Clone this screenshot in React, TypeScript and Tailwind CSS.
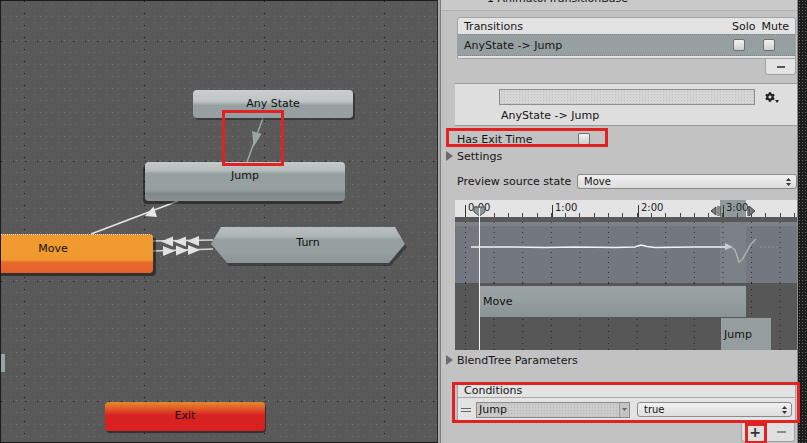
import React from "react";
import { FaCog } from "react-icons/fa";

const Check = () => (
  <div className="h-[12px] w-[12px] rounded-[2px] border border-[#707070] bg-[linear-gradient(to_bottom,#f2f2f2,#cfcfcf)]" />
);

const Fold = () => (
  <svg width="7" height="10" className="shrink-0">
    <path d="M0 0L7 5L0 10Z" fill="#6b6b6b" />
  </svg>
);

const UpDown = () => (
  <svg width="5" height="8">
    <path d="M2.5 0L5 3H0Z M0 5H5L2.5 8Z" fill="#333" />
  </svg>
);

function CanvasArt() {
  const vx = [23.5, 143.5, 263.5, 383.5];
  const hy = [40.5, 160.5, 280.5, 400.5];
  return (
    <svg className="absolute inset-0" width="437" height="443">
      <defs>
        <pattern id="minor" width="12" height="12" patternUnits="userSpaceOnUse">
          <rect x="3" y="3" width="1" height="1" fill="#737373" />
          <rect x="9" y="9" width="1" height="1" fill="#737373" />
          <rect x="9" y="3" width="1" height="1" fill="#686868" />
        </pattern>
      </defs>
      <rect width="437" height="443" fill="url(#minor)" />
      {vx.map((x) => (
        <line key={x} x1={x} y1="0" x2={x} y2="443" stroke="#151515" strokeDasharray="1 11" />
      ))}
      {hy.map((y) => (
        <line key={y} x1="0" y1={y} x2="437" y2={y} stroke="#151515" strokeDasharray="1 11" />
      ))}
      {/* Any -> Jump */}
      <line x1="262" y1="117" x2="246" y2="161" stroke="#9aa6a6" strokeWidth="1.5" />
      <polygon points="252.5,146 260.5,133 251,130" fill="#9aa6a6" />
      {/* Jump -> Move */}
      <line x1="177" y1="200" x2="90" y2="233" stroke="#e6e6e6" strokeWidth="1.5" />
      <polygon points="144,215 156,216 152.5,205.5" fill="#e6e6e6" />
      {/* Move <-> Turn */}
      <line x1="152" y1="240" x2="212" y2="239" stroke="#d6d6d6" strokeWidth="1.5" />
      <line x1="152" y1="250" x2="212" y2="248" stroke="#d6d6d6" strokeWidth="1.5" />
      <polygon points="160,240.5 172,235.5 172,245.5" fill="#e2e2e2" />
      <polygon points="173,240.5 185,235.5 185,245.5" fill="#e2e2e2" />
      <polygon points="186,240 198,235 198,245" fill="#e2e2e2" />
      <polygon points="174,250 162,245 162,255" fill="#e2e2e2" />
      <polygon points="187,249.5 175,244.5 175,254.5" fill="#e2e2e2" />
      <polygon points="199,249 187,244 187,254" fill="#e2e2e2" />
    </svg>
  );
}

function GraphCanvas() {
  return (
    <div className="relative h-[443px] w-[437px] shrink-0 overflow-hidden border-l border-t border-b border-[#1c1c1c] bg-[#595959]">
      <CanvasArt />
      {/* Any State */}
      <div className="absolute left-[192px] top-[89px] flex h-[28px] w-[160px] items-center justify-center rounded-[4px] bg-[linear-gradient(to_bottom,#cacdcd_0%,#bfc4c4_40%,#96a0a0_55%,#96a0a0_100%)] text-[11px] text-[#111] shadow-[2px_2px_0_rgba(0,0,0,0.35)]">
        Any State
      </div>
      {/* Jump */}
      <div className="absolute left-[144px] top-[161px] h-[39px] w-[200px] rounded-[4px] bg-[linear-gradient(to_bottom,#c5c9c9_0%,#b6bcbc_22%,#96a0a0_30%,#96a0a0_70%,#7f8888_82%,#8a9393_100%)] pt-[7px] text-center text-[11px] leading-[13px] text-[#111] shadow-[-2px_3px_0_rgba(0,0,0,0.45)]">
        Jump
      </div>
      {/* Move */}
      <div className="absolute left-[-48px] top-[233px] h-[39px] w-[200px] rounded-[4px] border-t border-dotted border-[#fff6e0] bg-[linear-gradient(to_bottom,#f09a30_0%,#f09a30_65%,#e86a2c_72%,#e5602a_100%)] pt-[7px] text-center text-[11px] leading-[13px] text-[#111] shadow-[3px_3px_0_rgba(0,0,0,0.45)]">
        Move
      </div>
      {/* Turn */}
      <div className="absolute left-[212px] top-[229px] h-[36px] w-[194px] bg-[#2e2e2e] opacity-60 [clip-path:polygon(10px_0,184px_0,194px_17px,178px_36px,16px_36px,0_17px)]" />
      <div className="absolute left-[210px] top-[226px] flex h-[36px] w-[194px] items-center justify-center bg-[linear-gradient(to_bottom,#b9bfbf_0%,#aeb5b5_25%,#96a0a0_35%,#96a0a0_70%,#8a9494_100%)] pb-[3px] text-[11px] text-[#111] [clip-path:polygon(10px_0,184px_0,194px_17px,178px_36px,16px_36px,0_17px)]">
        Turn
      </div>
      {/* partial node */}
      <div className="absolute left-0 top-[353px] h-[18px] w-[4px] bg-[#9aa3a3]" />
      {/* Exit */}
      <div className="absolute left-[104px] top-[401px] flex h-[29px] w-[160px] items-center justify-center rounded-[4px] bg-[linear-gradient(to_bottom,#e88a2a_0%,#e0602a_20%,#d92222_45%,#d92020_100%)] text-[11px] text-[#111] shadow-[1px_2px_0_rgba(0,0,0,0.45)]">
        Exit
      </div>
    </div>
  );
}

function Timeline() {
  const majors = [
    { x: 10, t: "0:00" },
    { x: 97, t: "1:00" },
    { x: 183, t: "2:00" },
    { x: 268, t: "3:00" },
  ];
  const minors: number[] = [];
  for (let i = 0; i < 24; i++) minors.push(10 + i * 14.3);
  const dots: number[] = [];
  for (let i = 0; i < 12; i++) dots.push(10.5 + i * 28.6);
  return (
    <div className="relative ml-[14px] mt-[11px] flex h-[150px] w-[342px] flex-col">
      {/* ruler */}
      <div className="relative h-[17px] bg-[#e4e4e4]">
        <svg className="absolute inset-0" width="342" height="17">
          <rect x="265" y="0" width="26" height="17" fill="#8f9b9b" />
          {minors.map((x) => (
            <line key={x} x1={Math.round(x) + 0.5} y1="13" x2={Math.round(x) + 0.5} y2="17" stroke="#444" />
          ))}
          {majors.map((m) => (
            <line key={m.x} x1={m.x + 0.5} y1="5" x2={m.x + 0.5} y2="17" stroke="#333" />
          ))}
          {majors.map((m) => (
            <text key={m.t} x={m.x + 3} y="11" fontSize="10" fill="#222" fontFamily="DejaVu Sans, sans-serif">
              {m.t}
            </text>
          ))}
          <path d="M19 7H30V12L24.5 16L19 12Z" fill="#8c9696" stroke="#555" />
          <path d="M265 6V16M263 6V16" stroke="#333" />
          <path d="M256 11L261 7V15Z" fill="#777" stroke="#444" />
          <path d="M293 6V16" stroke="#333" />
          <path d="M300 11L294 6V16Z" fill="#777" stroke="#444" />
        </svg>
      </div>
      <div className="h-[5px] bg-[#595959]" />
      {/* curve area */}
      <div className="relative h-[61px] bg-[#737880]">
        <div className="h-[4px] bg-[#7d8288]" />
        <svg className="absolute inset-0" width="342" height="61">
          <rect x="265" y="0" width="26" height="61" fill="#7b8186" />
          {dots.map((x) => (
            <line key={x} x1={x} y1="0" x2={x} y2="61" stroke="#2e2e2e" strokeDasharray="1 4" />
          ))}
          <polyline
            points="16,25 60,25 90,25.5 120,25 160,25.5 180,25 186,23 192,24.5 200,25.5 240,25 276,25"
            fill="none"
            stroke="#f2f2f2"
            strokeWidth="1.5"
          />
          <path d="M270 21L278 25L270 28Z" fill="#c8cccc" />
          <path d="M276 25L280 28L284 40L287 38L296 22L301 17" fill="none" stroke="#a8b4ac" strokeWidth="1.5" />
          <line x1="305" y1="25" x2="325" y2="25" stroke="#8a9090" strokeDasharray="2 2" />
        </svg>
      </div>
      {/* clips area */}
      <div className="relative flex h-[67px] flex-col bg-[#575757]">
        <svg className="absolute inset-0" width="342" height="67">
          {dots.map((x) => (
            <line key={x} x1={x} y1="0" x2={x} y2="67" stroke="#222" strokeDasharray="1 5" />
          ))}
        </svg>
        <div className="relative ml-[24px] mt-[3px] flex h-[31px] w-[267px] items-center bg-[linear-gradient(to_bottom,#98a2a3_0%,#96a0a1_40%,#8a9495_100%)] pl-[4px] text-[11px] text-[#111]">
          Move
        </div>
        <div className="relative ml-[266px] mt-[1px] flex h-[32px] w-[50px] items-center bg-[#949e9f] pl-[3px] text-[11px] text-[#111]">
          Jump
        </div>
      </div>
      <div className="absolute left-[24px] top-[8px] h-[142px] w-[1px] bg-[#f4f4f4]" />
    </div>
  );
}

function Inspector() {
  return (
    <div className="relative flex h-[443px] w-[356px] shrink-0 flex-col bg-[#c2c2c2] text-[11px] leading-[13px] text-[#151515]">
      {/* header cut off */}
      <div className="h-[11px] overflow-hidden border-b border-[#b0b0b0] bg-[#c9c9c9] pl-[46px]">
        <div className="mt-[-8px] whitespace-nowrap">1 AnimatorTransitionBase</div>
      </div>
      {/* transitions list */}
      <div className="ml-[16px] mr-[1px] mt-[6px] flex flex-col rounded-t-[3px] border border-[#a2a2a2] bg-[#e3e3e3]">
        <div className="flex h-[16px] items-center pl-[6px] pr-[6px]">
          <span>Transitions</span>
          <span className="ml-auto">Solo</span>
          <span className="ml-[6px]">Mute</span>
        </div>
        <div className="flex h-[22px] items-center border-y border-dotted border-[#7c8686] bg-[#96a0a0] pl-[6px]">
          <span>AnyState -&gt; Jump</span>
          <div className="ml-auto mr-[20px] flex gap-[18px]">
            <Check />
            <Check />
          </div>
        </div>
        <div className="h-[2px]" />
      </div>
      <div className="mr-[1px] flex h-[16px] w-[31px] items-center justify-center self-end rounded-b-[3px] border border-t-0 border-[#a2a2a2] bg-[#e3e3e3]">
        <div className="h-[2px] w-[8px] bg-[#555]" />
      </div>
      {/* info box */}
      <div className="ml-[14px] mt-[8px] h-[43px] border-y border-[#9a9a9a] bg-[#dedede] bg-[radial-gradient(#cfcfcf_0.6px,transparent_0.7px)] bg-[length:4px_4px]">
        <div className="mt-[5px] flex items-center">
          <div className="ml-[44px] h-[16px] w-[256px] border border-[#8e8e8e] bg-[#d5d5d5] bg-[radial-gradient(#bdbdbd_0.6px,transparent_0.7px)] bg-[length:3px_3px]" />
          <div className="ml-[10px] flex items-end text-[#222]">
            <FaCog size={10} />
            <svg width="4" height="3" className="mb-[-1px]">
              <path d="M0 0H4L2 3Z" fill="#222" />
            </svg>
          </div>
        </div>
        <div className="ml-[46px] mt-[4px]">AnyState -&gt; Jump</div>
      </div>
      {/* has exit time */}
      <div className="mt-[5px] flex h-[16px] items-center pl-[16px]">
        <span className="w-[121px]">Has Exit Time</span>
        <Check />
      </div>
      {/* settings */}
      <div className="mt-[1px] flex h-[16px] items-center gap-[4px] pl-[5px]">
        <Fold />
        <span>Settings</span>
      </div>
      {/* preview */}
      <div className="mt-[10px] flex h-[15px] items-center pl-[16px]">
        <span className="w-[120px] shrink-0">Preview source state</span>
        <div className="flex h-[15px] flex-1 items-center rounded-[3px] border border-[#8a8a8a] bg-[linear-gradient(to_bottom,#f0f0f0,#dcdcdc)] pl-[6px] pr-[5px]">
          <span className="text-[10px]">Move</span>
          <span className="ml-auto">
            <UpDown />
          </span>
        </div>
      </div>
      <Timeline />
      {/* blendtree */}
      <div className="mt-[2px] flex h-[16px] items-center gap-[4px] pl-[5px]">
        <Fold />
        <span>BlendTree Parameters</span>
      </div>
      {/* conditions */}
      <div className="ml-[16px] mr-[1px] mt-[14px] flex flex-col rounded-t-[3px] border border-[#a2a2a2] bg-[#e3e3e3]">
        <div className="flex h-[15px] items-center border-b border-[#a8a8a8] pl-[6px]">Conditions</div>
        <div className="flex h-[23px] items-center">
          <div className="ml-[3px] flex w-[10px] flex-col gap-[2px]">
            <div className="h-[1px] bg-[#666]" />
            <div className="h-[1px] bg-[#666]" />
          </div>
          <div className="ml-[5px] flex h-[16px] w-[154px] items-stretch border border-[#8a8a8a] bg-[#cbcbcb] bg-[radial-gradient(#b5b5b5_0.6px,transparent_0.7px)] bg-[length:3px_3px]">
            <span className="flex flex-1 items-center pl-[2px]">Jump</span>
            <span className="flex w-[10px] items-center justify-center border-l border-[#9a9a9a] bg-[#c4c4c4]">
              <svg width="5" height="3">
                <path d="M0 0H5L2.5 3Z" fill="#666" />
              </svg>
            </span>
          </div>
          <div className="ml-[7px] flex h-[15px] w-[155px] items-center rounded-[3px] border border-[#8a8a8a] bg-[linear-gradient(to_bottom,#f0f0f0,#dedede)] pl-[6px] pr-[4px]">
            <span className="text-[10px]">true</span>
            <span className="ml-auto">
              <UpDown />
            </span>
          </div>
        </div>
      </div>
      <div className="mr-[2px] flex h-[20px] w-[54px] self-end rounded-b-[3px] border border-t-0 border-[#a2a2a2] bg-[#e0e0e0]">
        <div className="flex w-[27px] items-center justify-center text-[14px] font-bold leading-none text-[#333]">+</div>
        <div className="flex w-[27px] items-center justify-center">
          <div className="h-[2px] w-[9px] bg-[#8a8a8a]" />
        </div>
      </div>
    </div>
  );
}

export default function App() {
  return (
    <div className="relative flex h-[443px] w-[807px] overflow-hidden bg-[#c2c2c2] font-['DejaVu_Sans',sans-serif]">
      <GraphCanvas />
      <div className="w-[1px] shrink-0 bg-[#2a2a2a]" />
      <div className="w-[2px] shrink-0 bg-[#a3a8ac]" />
      <div className="w-[1px] shrink-0 bg-[#7a7e82]" />
      <Inspector />
      <div className="w-[10px] shrink-0 border-l border-[#8a8a8a] bg-[#1c1c1c] bg-[radial-gradient(#6a6a6a_0.6px,transparent_0.7px)] bg-[length:3px_3px]" />
      {/* red annotation boxes */}
      <div className="pointer-events-none absolute left-[222px] top-[110px] h-[56px] w-[62px] border-[3px] border-[#e02222]" />
      <div className="pointer-events-none absolute left-[446px] top-[128px] h-[19px] w-[162px] border-[3px] border-[#e02222]" />
      <div className="pointer-events-none absolute left-[452px] top-[382px] h-[41px] w-[348px] border-[3px] border-[#e02222]" />
      <div className="pointer-events-none absolute left-[745px] top-[423px] h-[21px] w-[22px] border-[3px] border-[#e02222]" />
    </div>
  );
}
